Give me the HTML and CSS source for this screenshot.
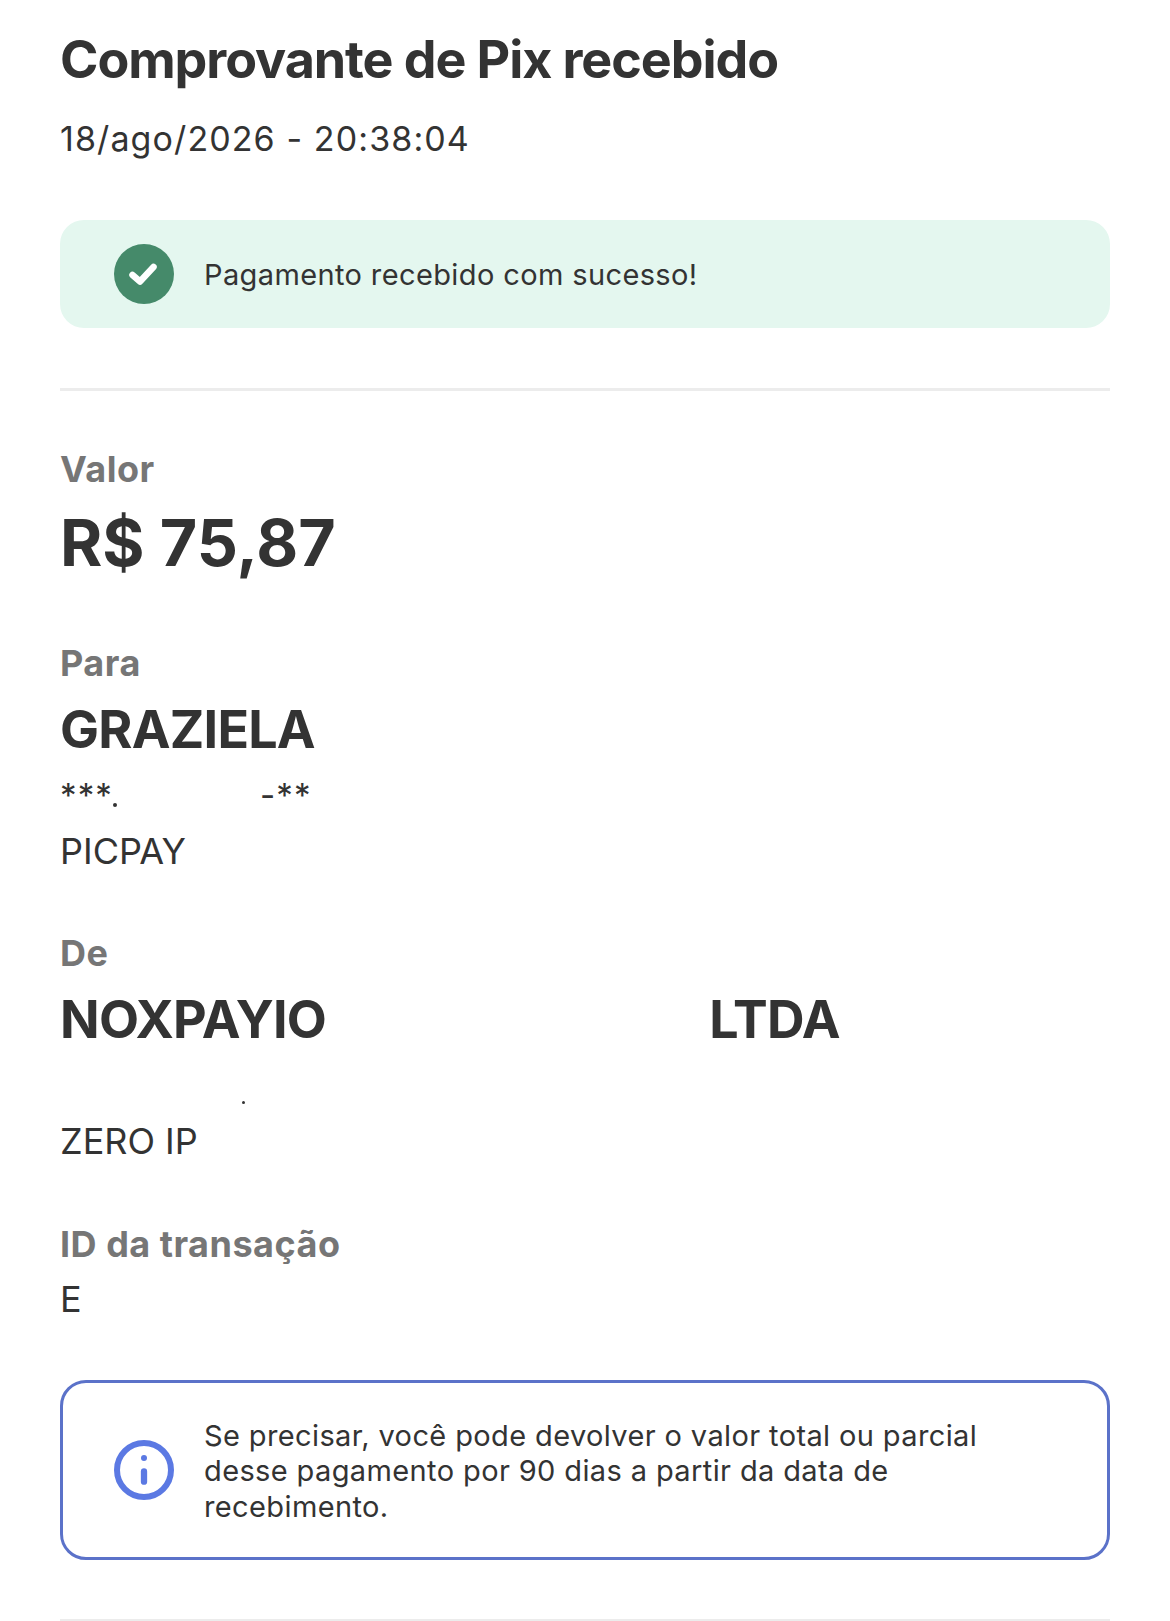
FILE: index.html
```html
<!DOCTYPE html>
<html lang="pt-BR">
<head>
    <meta charset="UTF-8">
    <meta name="viewport" content="width=device-width, initial-scale=1.0">
    <title>Comprovante de Pix recebido</title>
    <link rel="stylesheet" href="styles.css">
</head>
<body>
    <div class="container">
        <h1>Comprovante de Pix recebido</h1>
        <p class="date">18/ago/2026 - 20:38:04</p>

        <!-- Aviso de sucesso -->
        <div class="notice notice-success">
            <svg class="notice-icon" viewBox="0 0 60 60">
                <circle cx="30" cy="30" r="30" fill="#458a6a"/>
                <path d="M18.5 31l7.5 6.5L39.5 23" fill="none" stroke="#fff" stroke-width="6.5" stroke-linecap="round" stroke-linejoin="round"/>
            </svg>
            <p>Pagamento recebido com sucesso!</p>
        </div>

        <hr class="divider">

        <div class="section section-valor">
            <div class="label">Valor</div>
            <div class="amount">R$ 75,87</div>
        </div>

        <div class="section">
            <div class="label">Para</div>
            <div class="name">GRAZIELA</div>
            <div class="doc"><span class="doc-start">***<i class="dot"></i></span><span>-**</span></div>
            <div class="info">PICPAY</div>
        </div>

        <div class="section">
            <div class="label">De</div>
            <div class="name name-split"><span>NOXPAYIO</span><span>LTDA</span></div>
            <div class="doc-empty"><i class="dot dot-small"></i></div>
            <div class="info">ZERO IP</div>
        </div>

        <div class="section section-id">
            <div class="label">ID da transação</div>
            <div class="info info-id">E</div>
        </div>

        <!-- Aviso de devolução -->
        <div class="notice notice-info">
            <svg class="notice-icon" viewBox="0 0 60 60">
                <circle cx="30" cy="30" r="27" fill="none" stroke="#5b79e3" stroke-width="6"/>
                <circle cx="30" cy="18" r="3" fill="#5b79e3"/>
                <path d="M30 31.5v10.2" fill="none" stroke="#5b79e3" stroke-width="6.3" stroke-linecap="round"/>
            </svg>
            <p>Se precisar, você pode devolver o valor total ou parcial<br>desse pagamento por 90 dias a partir da data de<br>recebimento.</p>
        </div>

        <hr class="divider divider-bottom">
    </div>
</body>
</html>
```

FILE: styles.css
```css
body {
    font-family: Inter, "Liberation Sans", sans-serif;
    background-color: white;
    color: #333;
    margin: 0;
    height: 1621px;
    overflow: hidden;
}
.container {
    padding: 28px 60px 0;
}
h1 {
    font-size: 52px;
    line-height: 64px;
    font-weight: 700;
    letter-spacing: -1.07px;
    margin: 0;
}
.date {
    font-size: 34px;
    line-height: 44px;
    letter-spacing: 1.1px;
    margin: 25px 0 0;
}
.notice {
    display: flex;
    align-items: center;
    gap: 30px;
    padding: 0 54px;
    border-radius: 24px;
}
.notice p {
    margin: 0;
    padding-top: 2px;
    font-size: 29px;
    line-height: 35.5px;
    letter-spacing: 0.38px;
}
.notice-icon {
    width: 60px;
    height: 60px;
    flex-shrink: 0;
}
.notice-success {
    background-color: #e4f7ef;
    height: 108px;
    margin-top: 59px;
}
.notice-info {
    border: 3px solid #5b72c9;
    height: 180px;
    margin-top: 59px;
    padding: 0 51px;
    box-sizing: border-box;
    border-radius: 26px;
}
.divider {
    border: none;
    height: 3px;
    background-color: #ececec;
    margin: 60px 0 0;
}
.divider-bottom {
    margin-top: 59px;
}
.section {
    margin-top: 58px;
}
.section-valor {
    margin-top: 56px;
}
.section-id {
    margin-top: 59px;
}
.label {
    font-size: 36px;
    line-height: 44px;
    font-weight: 700;
    letter-spacing: 0.5px;
    color: #767676;
}
.amount {
    font-size: 64.5px;
    line-height: 80px;
    font-weight: 700;
    margin-top: 12px;
}
.name {
    font-size: 52px;
    line-height: 64px;
    font-weight: 700;
    letter-spacing: -0.75px;
    margin-top: 13px;
}
.name-split {
    display: flex;
    gap: 383px;
}
.doc {
    display: flex;
    font-size: 33px;
    line-height: 39px;
    margin-top: 14px;
}
.doc-start {
    width: 200px;
    letter-spacing: 1.1px;
}
.doc span:last-child {
    letter-spacing: 1.1px;
}
.dot {
    display: inline-block;
    width: 4px;
    height: 4px;
    border-radius: 50%;
    background-color: #333;
}
.doc-empty {
    height: 40px;
    margin-top: 13px;
    padding-left: 182px;
    padding-top: 36px;
    box-sizing: border-box;
}
.dot-small {
    display: block;
    width: 3px;
    height: 3px;
}
.info {
    font-size: 36px;
    line-height: 44px;
    margin-top: 14px;
}
.info-id {
    margin-top: 11px;
}
```
